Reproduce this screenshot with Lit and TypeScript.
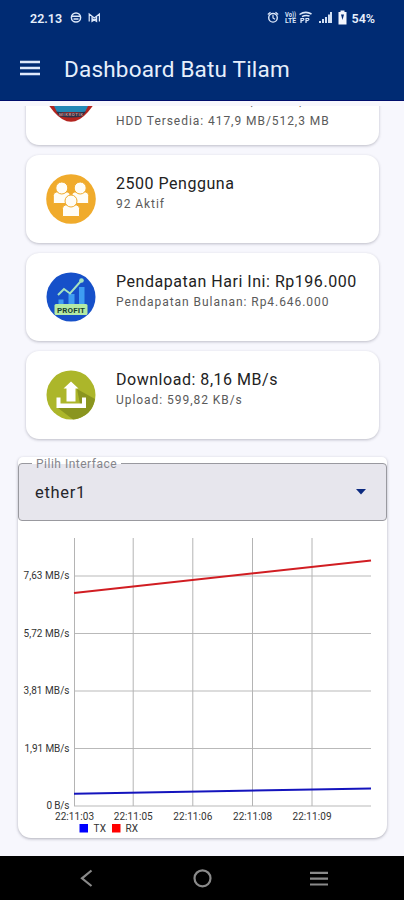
import { LitElement, html, svg, css } from "lit";
import { customElement } from "lit/decorators.js";
import { classMap } from "lit/directives/class-map.js";

const routerIcon = svg`
  <path d="M2.500 29L8 36Q25 55.500 42 36L47.500 29Z" fill="#b3241f"/>
  <path d="M7.500 29H42.500L39 36H11Z" fill="#2389b5"/>
  <path d="M10 35.500Q25 38 40 35.500L36 40.500Q25 42.500 14 40.500Z" fill="#2b3349"/>
  <text x="25" y="40.300" text-anchor="middle" font-size="4.200" font-weight="700" fill="#c98e8a" textLength="24">MIKROTIK</text>`;

const person = (x: number, y: number) => svg`
  <g transform="translate(${x} ${y})" fill="#fffdf6" stroke="#f0ab2c" stroke-width="1">
    <path d="M-8.500 15.500V7.500Q-8.500 4.500-5.500 4H5.500Q8.500 4.500 8.500 7.500V15.500Z"/>
    <circle r="6"/>
  </g>`;

const usersIcon = svg`
  <circle cx="25" cy="25" r="24.800" fill="#f0ab2c"/>
  ${person(15.8, 14)}${person(34.2, 14)}${person(25, 27)}`;

const profitIcon = svg`
  <circle cx="25" cy="25" r="24.500" fill="#1650c9"/>
  <path d="M12.500 27.500h5v6h-5zM22.500 22h6v11h-6zM33 15h5.500v19h-5.500z" fill="#3e9df2"/>
  <path d="M12 23L18 17L24 21.500L35 9" fill="none" stroke="#a5e3c0" stroke-width="2"/>
  <circle cx="35.500" cy="8.500" r="2.300" fill="#a5e3c0"/>
  <rect x="8.500" y="32" width="33" height="11" rx="1.500" fill="#b4eaa4"/>
  <text x="25" y="40.500" text-anchor="middle" font-size="8" font-weight="700" fill="#16402f" textLength="28">PROFIT</text>`;

const uploadIcon = svg`
  <circle cx="25" cy="25" r="24.500" fill="#acb62a"/>
  <path d="M31 19L49 29Q46 47 27 49.500L12 38L34 34Z" fill="#8a951f"/>
  <path d="M25 11.500L32.500 18.500H29.500V31.500H20.500V18.500H17.500Z" fill="#fff"/>
  <path d="M10.500 27.500H14.500V33.500H36V27.500H40V38H10.500Z" fill="#fff"/>`;

const cards = [
  { icon: routerIcon, title: "CPU Load: 3%", subs: ["Memori Tersedia: 819,2 MB/1,0 GB", "HDD Tersedia: 417,9 MB/512,3 MB"] },
  { icon: usersIcon, title: "2500 Pengguna", subs: ["92 Aktif"] },
  { icon: profitIcon, title: "Pendapatan Hari Ini: Rp196.000", subs: ["Pendapatan Bulanan: Rp4.646.000"] },
  { icon: uploadIcon, title: "Download: 8,16 MB/s", subs: ["Upload: 599,82 KB/s"] },
];

const rows = [
  { y: 55, label: "7,63 MB/s", w: 46 },
  { y: 112.5, label: "5,72 MB/s", w: 46 },
  { y: 170, label: "3,81 MB/s", w: 46 },
  { y: 227.5, label: "1,91 MB/s", w: 45 },
  { y: 285, label: "0 B/s", w: 23 },
];
const cols = [
  { x: 56.5, label: "22:11:03" },
  { x: 115.2, label: "22:11:05" },
  { x: 174.8, label: "22:11:06" },
  { x: 234.5, label: "22:11:08" },
  { x: 294, label: "22:11:09" },
];

@customElement("app-root")
export class AppRoot extends LitElement {
  static styles = css`
    :host { display: flex; flex-direction: column; width: 404px; height: 900px; overflow: hidden; background: #f7f7fd; font-family: Roboto, sans-serif; }
    * { box-sizing: border-box; }
    svg { display: block; }
    header { height: 101px; flex: none; background: #002b73; border-bottom: 1px solid #000f6c; color: #e6effc; }
    .status { height: 36px; padding: 0 29px 0 30px; display: flex; justify-content: space-between; align-items: center; font-size: 12.500px; font-weight: 600; }
    .group { display: flex; align-items: center; }
    .clock { width: 40px; }
    .bar { height: 65px; display: flex; align-items: center; padding: 0 20px 2px; }
    .title { margin: 3px 0 0 24px; font-size: 22.500px; letter-spacing: 0.200px; white-space: nowrap; }
    main { flex: none; height: 755px; padding-top: 5px; }
    .list { height: 346px; overflow: hidden; display: flex; flex-direction: column; justify-content: flex-end; gap: 10px; padding: 0 25px 13px 26px; }
    .card { flex: none; height: 88px; border-radius: 13px; background: #fff; box-shadow: 0 1px 3px rgba(40, 40, 60, 0.280); display: flex; padding: 19px 0 0 20px; }
    .icon { flex: none; width: 50px; height: 50px; }
    .text { margin-left: 20px; white-space: nowrap; }
    .text.tall { margin-top: -5px; }
    .name { font-size: 16px; line-height: 20px; color: #222; letter-spacing: 0.530px; }
    .sub { font-size: 12px; line-height: 20px; color: #5a5a5a; letter-spacing: 0.950px; }
    .panel { width: 369px; height: 381px; margin: 5px 0 0 18px; background: #fff; border-radius: 5px 5px 13px 13px; box-shadow: 0 1px 3px rgba(40, 40, 60, 0.350); padding-top: 6px; }
    .select { position: relative; height: 58px; border: 1px solid #99999f; border-radius: 4px; background: #e7e6ed; display: flex; align-items: center; justify-content: space-between; padding: 0 20px 0 16px; font-size: 16.500px; letter-spacing: 0.700px; color: #25252a; }
    .legend { position: absolute; left: 13px; top: -7px; padding: 0 4px; font-size: 12px; line-height: 14px; letter-spacing: 0.500px; color: #85858b; background: linear-gradient(#fff 50%, #e7e6ed 50%); white-space: nowrap; }
    nav { height: 44px; flex: none; background: #000; display: flex; justify-content: center; align-items: center; }
  `;

  private statusBar() {
    return html`<div class="status">
      <div class="group">
        <span class="clock">22.13</span>
        <svg width="32" height="14" viewBox="0 0 32 14" fill="none" stroke="#dce8fa" stroke-width="1.500">
          <circle cx="6" cy="6.500" r="4.600"/><path d="M2 5.200H10M3.500 8H8.500" />
          <path d="M19.200 10.500V3L24.300 7L29.400 3V10.500M22 5V10.500L26.600 7.500M26.600 5V10.500L22 7.500" stroke-width="1.200"/>
        </svg>
      </div>
      <div class="group">
        <svg width="84" height="18" viewBox="267 9 84 18" fill="none" stroke="#dce8fa">
          <circle cx="273" cy="17.800" r="4.300" stroke-width="1.400"/>
          <path d="M267.800 14.500L270.500 12.300M278.200 14.500L275.500 12.300M273 15V18L275 19.200" stroke-width="1.200"/>
          <g fill="#dce8fa" stroke="none" font-weight="700" font-size="6.800">
            <text x="285" y="17.200" textLength="11" lengthAdjust="spacingAndGlyphs">Vo))</text>
            <text x="285" y="23.200" textLength="11" lengthAdjust="spacingAndGlyphs">LTE</text>
          </g>
          <path d="M299.500 14.500Q305.500 10.500 311.500 14M302 16.700Q305.500 14.500 309.500 16" stroke-width="1.500"/>
          <path d="M301 23V18.500H303.500Q305 20 301 21M306 23V18.500H308.500Q310 20 306 21" stroke-width="1.200"/>
          <path d="M320 21V23M323 19V23M326 17V23M329 14.500V23M331 12V23" stroke-width="1.900"/>
          <path d="M340.500 10.500H344.500V12H346.500V24.500H338.500V12H340.500Z" fill="#f3f7ff" stroke="none"/>
          <path d="M341 14.500L344 14.500L342.500 20Z" fill="#002b73" stroke="none"/>
        </svg>
        <span>54%</span>
      </div>
    </div>`;
  }

  private chart() {
    return svg`
      ${rows.map((r) => svg`<path d="M56 ${r.y}H353" stroke="#b9b9b9"/>
        <text x="51.500" y="${r.y + 3}" text-anchor="end" textLength="${r.w}">${r.label}</text>`)}
      ${cols.map((c) => svg`<path d="M${c.x} 17V285" stroke="#b4b4b4"/>
        <text x="${c.x}" y="299" text-anchor="middle" textLength="39">${c.label}</text>`)}
      <path d="M56 72L353 39.500" stroke="#d11d22" stroke-width="2"/>
      <path d="M56 272.800L353 267.500" stroke="#1414bd" stroke-width="2"/>
      <path d="M61.500 303H70V311.500H61.500Z" fill="#00f"/>
      <path d="M94 303H102.500V311.500H94Z" fill="#f00"/>
      <text x="75.500" y="310.500" textLength="12.500">TX</text>
      <text x="107.500" y="310.500" textLength="12.500">RX</text>`;
  }

  render() {
    return html`
      <header>
        ${this.statusBar()}
        <div class="bar">
          <svg width="20" height="16" viewBox="0 0 20 16"><path d="M0 2H20M0 8H20M0 14H20" stroke="#dfe9fb" stroke-width="2.600"/></svg>
          <div class="title">Dashboard Batu Tilam</div>
        </div>
      </header>
      <main>
        <div class="list">
          ${cards.map((c) => html`<section class="card">
            <svg class="icon" viewBox="0 0 50 50">${c.icon}</svg>
            <div class=${classMap({ text: true, tall: c.subs.length > 1 })}>
              <div class="name">${c.title}</div>
              ${c.subs.map((s) => html`<div class="sub">${s}</div>`)}
            </div>
          </section>`)}
        </div>
        <section class="panel">
          <div class="select">
            <span class="legend">Pilih Interface</span>
            <span>ether1</span>
            <svg width="10" height="6" viewBox="0 0 10 6"><path d="M0 0H10L5 5.500Z" fill="#0c2a80"/></svg>
          </div>
          <svg width="369" height="317" viewBox="0 0 369 317" font-size="10" fill="#333">${this.chart()}</svg>
        </section>
      </main>
      <nav>
        <svg width="404" height="44" viewBox="0 0 404 44" fill="none" stroke="#8a8a8a" stroke-width="2.200">
          <path d="M91.500 14.500L82 22.300L91.500 30"/>
          <circle cx="202.500" cy="22.300" r="8"/>
          <path d="M310 16.800H328M310 22.700H328M310 28.500H328"/>
        </svg>
      </nav>`;
  }
}
